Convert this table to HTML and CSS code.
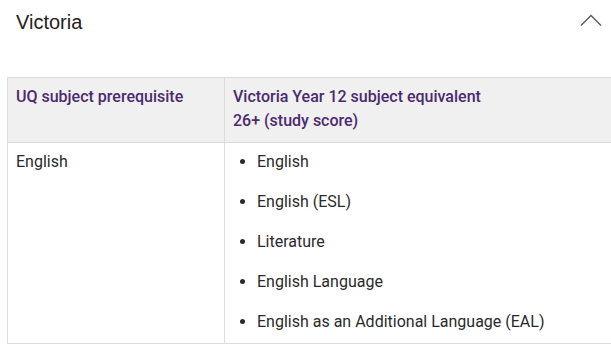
FILE: index.html
```html
<!DOCTYPE html>
<html>
<head>
<meta charset="utf-8">
<link rel="stylesheet" href="styles.css">
</head>
<body>
<div class="accordion">
  <div class="acc-head">
    <h2 class="acc-title">Victoria</h2>
    <svg class="chev" width="22" height="14" viewBox="0 0 22 14"><path d="M1 12.5 L11 2.5 L21 12.5" fill="none" stroke="#555" stroke-width="1.3"/></svg>
  </div>
  <div class="table-wrap">
    <table class="req">
      <thead>
        <tr>
          <th class="c1">UQ subject prerequisite</th>
          <th class="c2">Victoria Year 12 subject equivalent<br>26+ (study score)</th>
        </tr>
      </thead>
      <tbody>
        <tr>
          <td class="c1">English</td>
          <td class="c2">
            <ul class="list">
              <li>English</li>
              <li>English (ESL)</li>
              <li>Literature</li>
              <li>English Language</li>
              <li>English as an Additional Language (EAL)</li>
            </ul>
          </td>
        </tr>
      </tbody>
    </table>
  </div>
</div>
</body>
</html>
```
FILE: styles.css
```css
html, body {
  margin: 0;
  padding: 0;
  background: #fff;
  overflow: hidden;
}
body {
  width: 611px;
  height: 346px;
}
.accordion {
  padding: 0 0 0 7px;
}
.acc-head {
  display: flex;
  align-items: flex-start;
  justify-content: space-between;
  height: 77px;
  padding: 0 8px 0 9px;
}
.acc-title {
  margin: 10px 0 0 0;
  font-family: "Liberation Sans", Arial, sans-serif;
  font-weight: 400;
  font-size: 20px;
  line-height: 24px;
  color: #222;
}
.chev {
  margin-top: 13px;
  margin-right: 1px;
}
.table-wrap {
  overflow: hidden;
}
.req {
  border-collapse: collapse;
  width: calc(100% + 4px);
  font-family: Roboto, "Noto Sans", sans-serif;
  font-size: 16px;
  line-height: 24px;
  color: #2a2a2a;
}
.req th, .req td {
  border: 1px solid #dcdcdc;
  text-align: left;
  vertical-align: top;
}
.req th {
  background: #f0f0f0;
  color: #4b2a6e;
  font-weight: 500;
  padding: 7px 8px 9px 8px;
}
.req td {
  padding: 7px 8px 9px 8px;
}
.req .c1 {
  width: 200px;
}
.list {
  margin: 0;
  padding: 0 0 0 24px;
}
.list li {
  margin: 0 0 16px 0;
}
.list li:last-child {
  margin-bottom: 0;
}
```
